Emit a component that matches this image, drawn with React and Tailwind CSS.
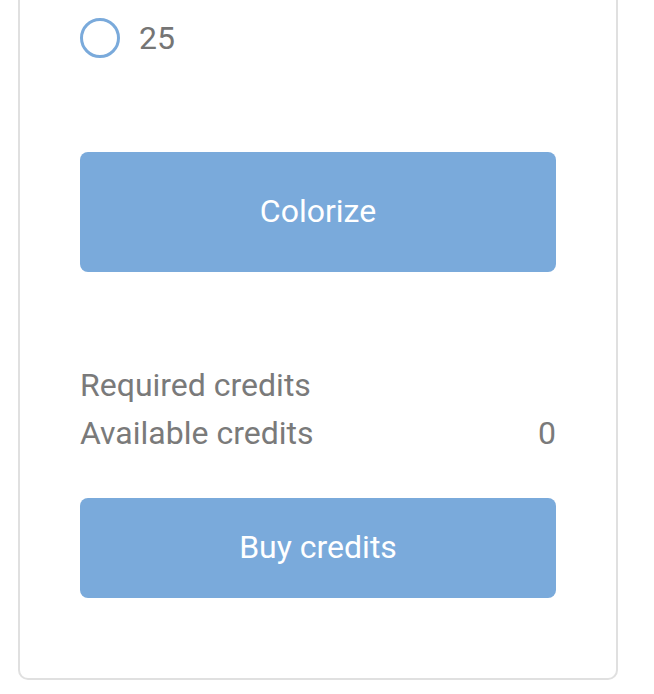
export default function App() {
  return (
    <div className="w-[654px] h-[694px] bg-white pl-[18px]" style={{ fontFamily: 'Roboto, "Liberation Sans", sans-serif' }}>
      <div className="w-[600px] border-2 border-t-0 border-[#e0e0e0] rounded-b-[10px] px-[60px] pb-[80px] flex flex-col">
        <div className="mt-[18px] flex items-center gap-[19px] h-[40px]">
          <span className="w-10 h-10 rounded-full border-[3px] border-[#7aaadb] shrink-0" />
          <span className="text-[32px] leading-[40px] text-[#757575] -mt-[1px]">25</span>
        </div>
        <button className="mt-[94px] h-[120px] w-full rounded-[8px] bg-[#7aaadb] text-white text-[32px] pb-[2px]">
          Colorize
        </button>
        <div className="mt-[89px] mb-[2px] flex flex-col text-[32px] leading-[48px] text-[#7a7a7a]">
          <div>Required credits</div>
          <div className="flex justify-between">
            <span>Available credits</span>
            <span>0</span>
          </div>
        </div>
        <button className="mt-[39px] h-[100px] w-full rounded-[8px] bg-[#7aaadb] text-white text-[32px] pb-[2px]">
          Buy credits
        </button>
      </div>
    </div>
  );
}
